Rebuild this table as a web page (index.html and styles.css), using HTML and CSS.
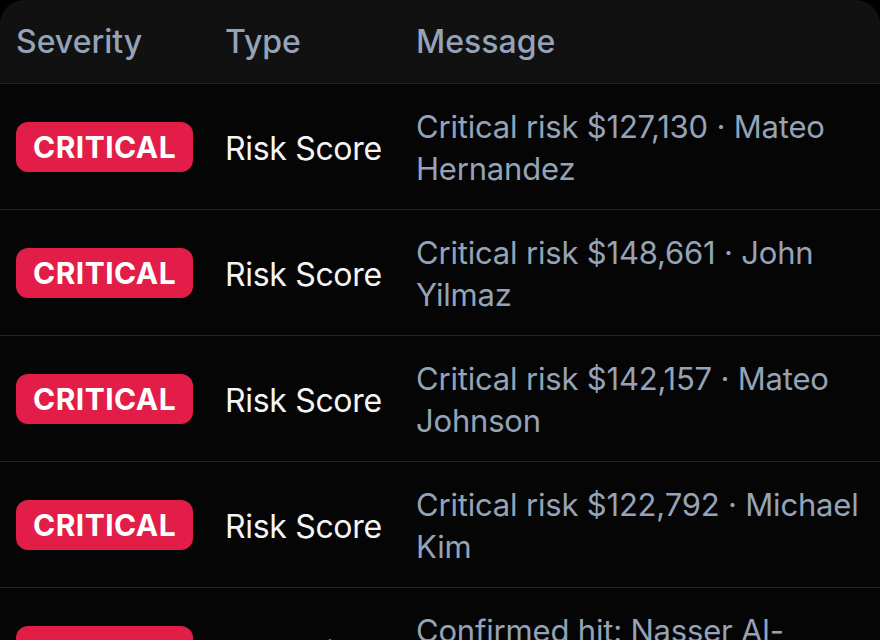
FILE: index.html
```html
<!DOCTYPE html>
<html lang="en">
<head>
    <meta charset="UTF-8">
    <meta name="viewport" content="width=device-width, initial-scale=1.0">
    <title>Alerts</title>
    <link rel="stylesheet" href="styles.css">
</head>
<body>
    <!-- Alerts Table -->
    <div class="alerts-card">
        <table class="alerts-table">
            <thead>
                <tr>
                    <th class="col-severity">Severity</th>
                    <th class="col-type">Type</th>
                    <th>Message</th>
                </tr>
            </thead>
            <tbody>
                <tr>
                    <td><span class="badge">CRITICAL</span></td>
                    <td class="type">Risk Score</td>
                    <td class="message">Critical risk $127,130 · Mateo Hernandez</td>
                </tr>
                <tr>
                    <td><span class="badge">CRITICAL</span></td>
                    <td class="type">Risk Score</td>
                    <td class="message">Critical risk $148,661 · John Yilmaz</td>
                </tr>
                <tr>
                    <td><span class="badge">CRITICAL</span></td>
                    <td class="type">Risk Score</td>
                    <td class="message">Critical risk $142,157 · Mateo Johnson</td>
                </tr>
                <tr>
                    <td><span class="badge">CRITICAL</span></td>
                    <td class="type">Risk Score</td>
                    <td class="message">Critical risk $122,792 · Michael Kim</td>
                </tr>
                <tr>
                    <td><span class="badge">CRITICAL</span></td>
                    <td class="type">Watchlist</td>
                    <td class="message">Confirmed hit: Nasser Al-Rashid</td>
                </tr>
            </tbody>
        </table>
    </div>
</body>
</html>
```

FILE: styles.css
```css
/* General Styles */
body {
    font-family: 'Inter', 'Liberation Sans', sans-serif;
    margin: 0;
    padding: 0;
    background-color: #000;
    overflow: hidden;
}

/* Card */
.alerts-card {
    background-color: #050505;
    border-radius: 24px 24px 0 0;
    overflow: hidden;
}

.alerts-table {
    width: 100%;
    border-collapse: collapse;
    table-layout: fixed;
}

.alerts-table th,
.alerts-table td {
    text-align: left;
    vertical-align: middle;
    padding: 21px 16px 20px;
    border-bottom: 1px solid #232323;
    line-height: 42px;
}

/* Header */
.alerts-table thead tr {
    background-color: #111;
}

.alerts-table th {
    font-size: 32px;
    font-weight: 500;
    color: #94a3b8;
}

.col-severity {
    width: 177px;
}

.col-type {
    width: 159px;
}

/* Cells */
.badge {
    display: inline-block;
    background-color: #e11d48;
    color: #fff;
    font-size: 30px;
    font-weight: 700;
    line-height: 42px;
    padding: 4px 17px;
    border-radius: 12px;
    letter-spacing: 0.015em;
}

.alerts-table .type {
    font-size: 32px;
    color: #f5f5f5;
    letter-spacing: -0.01em;
    white-space: nowrap;
    padding-top: 23px;
    padding-bottom: 18px;
}

.alerts-table .message {
    font-size: 31px;
    color: #94a3b8;
    letter-spacing: -0.006em;
    padding-top: 22px;
    padding-bottom: 19px;
    padding-right: 6px;
}
```
